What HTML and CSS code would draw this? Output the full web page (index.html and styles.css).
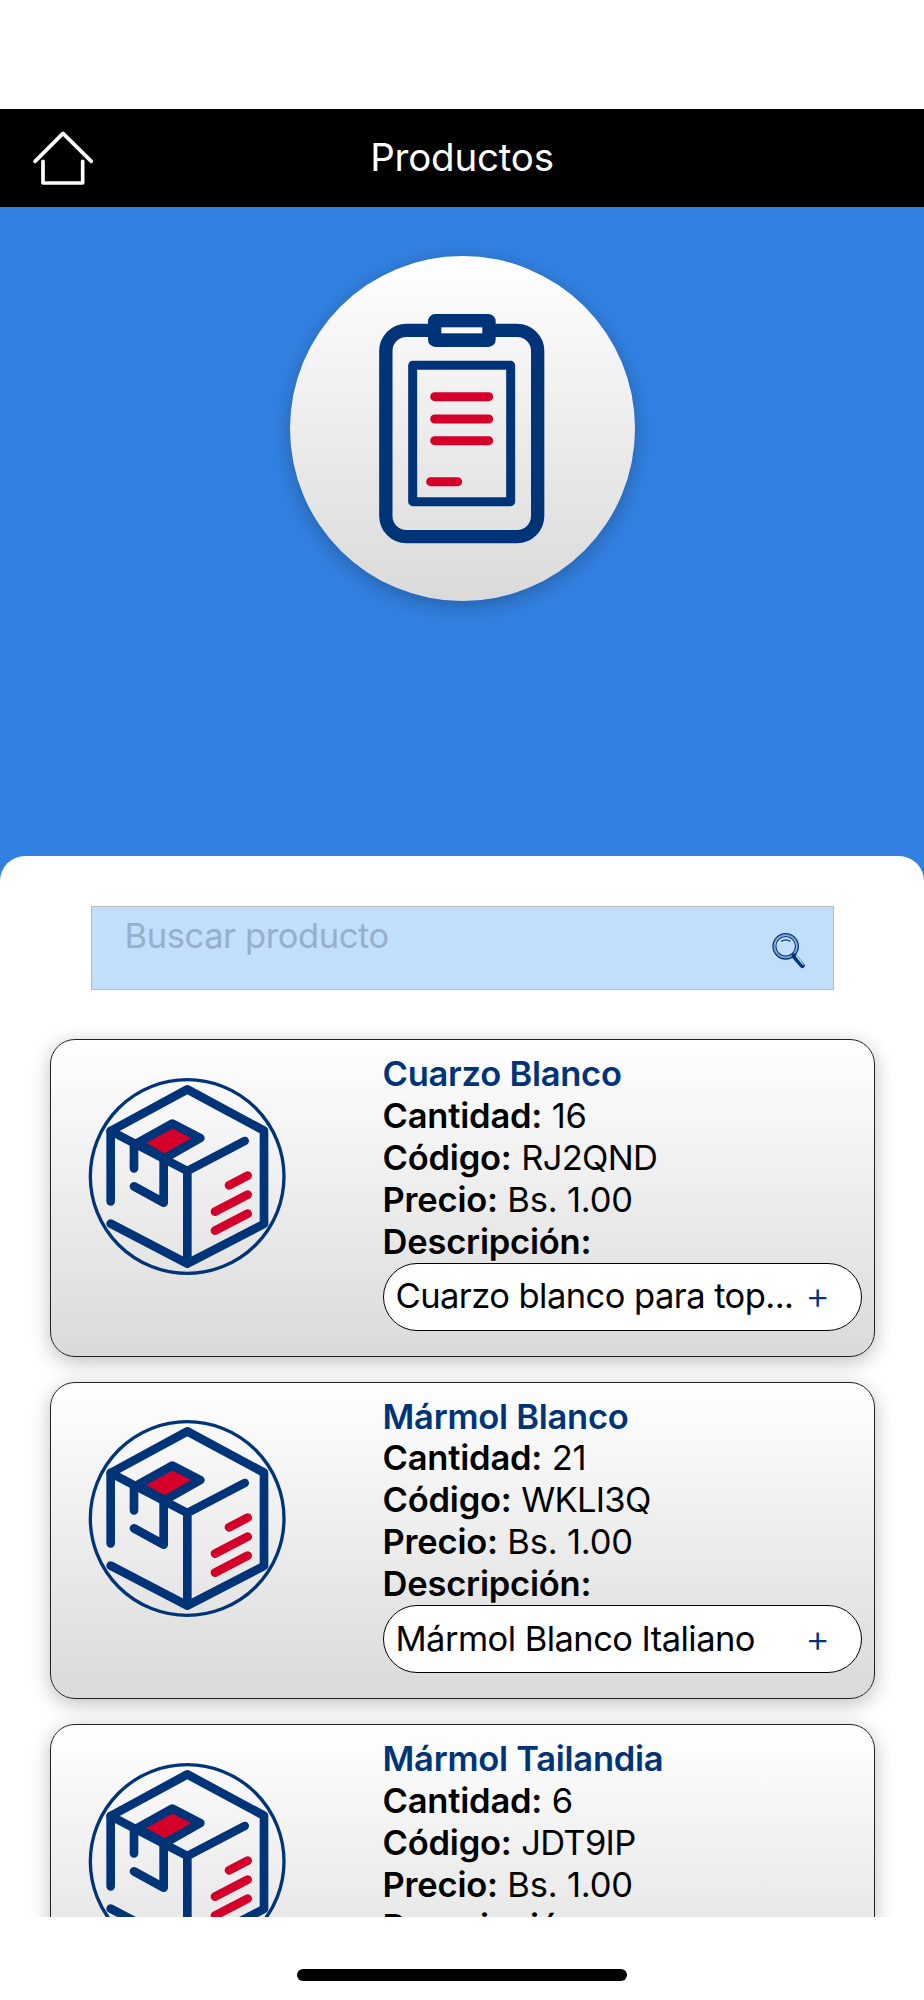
FILE: index.html
```html
<!DOCTYPE html>
<html lang="es">
<head>
<meta charset="utf-8">
<title>Productos</title>
<link rel="stylesheet" href="styles.css">
</head>
<body>
<svg class="defs" width="0" height="0" aria-hidden="true">
  <symbol id="box" viewBox="142 140 597 597">
    <circle cx="439.500" cy="438.500" r="290.500" fill="none" stroke="#003478" stroke-width="10"/>
    <g fill="none" stroke="#003478" stroke-width="26" stroke-linecap="round" stroke-linejoin="round">
      <path d="M210 513V302L440 177 670 301V581L440 700 210 580"/>
      <path d="M210 302L440 422 612 332M440 422V695"/>
      <path d="M395 280L479 323 372 384 290 338Z" fill="#d4002a"/>
      <path d="M280 340V414M369 390V517L280 468"/>
    </g>
    <path d="M565 465L621 436M523 544L621 493M523 601L621 550" fill="none" stroke="#d4002a" stroke-width="26" stroke-linecap="round"/>
  </symbol>
</svg>
<div class="screen">
  <header class="topbar">
    <svg class="home" viewBox="96 120 186 168" fill="none" stroke="#fff" stroke-width="11" stroke-linecap="round" stroke-linejoin="round">
      <path d="M105 214L189 130 274 214M129 214V279H248V214"/>
    </svg>
    <h1 class="title">Productos</h1>
  </header>
  <section class="hero">
    <div class="badge">
      <svg viewBox="60 48 1035 1035" fill="none" stroke="#003478">
        <rect x="347.500" y="271" width="455.500" height="619" rx="62" stroke-width="40"/>
        <rect x="474" y="222" width="203" height="99" rx="22" fill="#003478" stroke="none"/>
        <rect x="514" y="262" width="123" height="18" fill="#fafafa" stroke="none"/>
        <rect x="428" y="376" width="294" height="409" stroke-width="27" stroke-linejoin="round"/>
        <path d="M494 470H656M494 537H656M494 602H656M482 725H563" stroke="#d4002a" stroke-width="27" stroke-linecap="round"/>
      </svg>
    </div>
  </section>
  <main class="sheet">
    <div class="search">
      <span class="placeholder">Buscar producto</span>
      <svg class="lens" viewBox="0 0 150 150" fill="none" stroke="#003478">
        <circle cx="62" cy="64" r="38" stroke-width="4"/>
        <circle cx="62" cy="64" r="29.500" stroke-width="3.500"/>
        <circle cx="62" cy="64" r="34" stroke-width="4" opacity=".35"/>
        <path d="M49 49Q62 40 76 49" stroke-width="4"/>
        <path d="M87 93L112 122" stroke-width="15" stroke-linecap="round"/>
        <path d="M94 93L114 118" stroke="#c1defa" stroke-width="4" stroke-linecap="round"/>
      </svg>
    </div>
    <div class="list">
      <article class="card">
        <svg class="thumb"><use href="#box"/></svg>
        <div class="info">
          <h2 class="name">Cuarzo Blanco</h2>
          <p class="row"><b>Cantidad:</b> 16</p>
          <p class="row"><b>Código:</b> <span class="code">RJ2QND</span></p>
          <p class="row"><b>Precio:</b> Bs. 1.00</p>
          <p class="row"><b>Descripción:</b></p>
          <div class="pill"><span class="desc">Cuarzo blanco para top...</span><span class="plus">+</span></div>
        </div>
      </article>
      <article class="card">
        <svg class="thumb"><use href="#box"/></svg>
        <div class="info">
          <h2 class="name">Mármol Blanco</h2>
          <p class="row"><b>Cantidad:</b> 21</p>
          <p class="row"><b>Código:</b> <span class="code">WKLI3Q</span></p>
          <p class="row"><b>Precio:</b> Bs. 1.00</p>
          <p class="row"><b>Descripción:</b></p>
          <div class="pill"><span class="desc">Mármol Blanco Italiano</span><span class="plus">+</span></div>
        </div>
      </article>
      <article class="card">
        <svg class="thumb"><use href="#box"/></svg>
        <div class="info">
          <h2 class="name">Mármol Tailandia</h2>
          <p class="row"><b>Cantidad:</b> 6</p>
          <p class="row"><b>Código:</b> <span class="code">JDT9IP</span></p>
          <p class="row"><b>Precio:</b> Bs. 1.00</p>
          <p class="row"><b>Descripción:</b></p>
        </div>
      </article>
    </div>
  </main>
  <footer class="bottom"><div class="indicator"></div></footer>
</div>
</body>
</html>
```
FILE: styles.css
```css
* { box-sizing: border-box; }
body {
  margin: 0;
  background: #fff;
  font-family: Inter, "Liberation Sans", sans-serif;
  font-size: 34.5px;
  line-height: 41.9px;
  color: #000;
}
h1, h2, p { margin: 0; }
.defs { display: block; }
.screen {
  display: flex;
  flex-direction: column;
  height: 2000px;
  padding-top: 108.6px;
  overflow: hidden;
}
.topbar {
  flex: none;
  display: grid;
  grid-template-columns: 150px 1fr 150px;
  align-items: center;
  height: 98.4px;
  background: #000;
  color: #fff;
}
.home { width: 62px; height: 56px; margin-left: 32px; }
.title {
  padding-top: 1px;
  font-size: 38.5px;
  font-weight: 400;
  letter-spacing: -0.2px;
  text-align: center;
}
.hero {
  flex: none;
  display: flex;
  justify-content: center;
  align-items: flex-start;
  height: 689px;
  padding-top: 49px;
  background: #3280e1;
}
.badge {
  width: 345px;
  height: 345px;
  margin-left: 1px;
  border-radius: 50%;
  background: linear-gradient(#fff, #dadada);
  box-shadow: 0 5px 20px rgba(0, 0, 0, 0.25);
}
.badge svg { display: block; width: 100%; height: 100%; }
.sheet {
  flex: none;
  display: flex;
  flex-direction: column;
  height: 1061px;
  margin-top: -39.5px;
  padding: 49.5px 49.5px 0;
  border-radius: 25px 25px 0 0;
  background: #fff;
  overflow: hidden;
}
.search {
  flex: none;
  display: flex;
  justify-content: space-between;
  height: 84px;
  margin: 0 41px;
  padding: 8px 18px 0 33px;
  border: 1.5px solid #b4bcc0;
  background: #c1defa;
}
.placeholder { color: #95afcc; letter-spacing: -0.4px; }
.lens { width: 50px; height: 50px; margin-top: 10.5px; }
.list {
  display: flex;
  flex-direction: column;
  gap: 24.9px;
  padding-top: 49px;
}
.card {
  flex: none;
  display: flex;
  justify-content: space-between;
  height: 317.7px;
  padding: 13px 11.5px 0 37px;
  border: 1.3px solid #222;
  border-radius: 25px;
  background: linear-gradient(#fff, #dadada);
  box-shadow: 0 5px 20px rgba(0, 0, 0, 0.25);
}
.thumb { width: 199px; height: 199px; margin-top: 23.7px; }
.info { width: 479.5px; }
.name {
  color: #003478;
  font-size: 34.5px;
  font-weight: 600;
  letter-spacing: -0.25px;
}
.row { letter-spacing: -0.2px; white-space: nowrap; }
.row b { font-weight: 600; letter-spacing: -0.2px; }
.code { letter-spacing: -0.7px; }
.pill {
  display: flex;
  align-items: center;
  justify-content: space-between;
  height: 68px;
  padding: 0 31px 0 12px;
  border: 1.3px solid #000;
  border-radius: 34px;
  background: #fff;
}
.desc { padding-bottom: 1px; letter-spacing: -0.55px; white-space: nowrap; }
.plus { padding-bottom: 1px; color: #003478; font-size: 38px; font-weight: 300; }
.bottom {
  flex: 1;
  display: flex;
  justify-content: center;
  align-items: flex-start;
  padding-top: 51.5px;
  background: #fff;
}
.indicator { width: 330.5px; height: 12.5px; border-radius: 7px; background: #000; }
```
